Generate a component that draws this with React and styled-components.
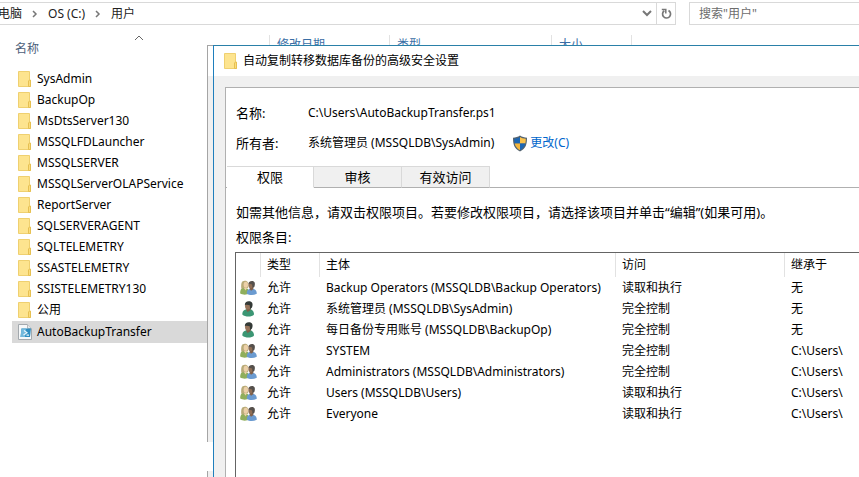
import React, { useState } from "react";
import styled, { createGlobalStyle } from "styled-components";

const folders = [
  "SysAdmin",
  "BackupOp",
  "MsDtsServer130",
  "MSSQLFDLauncher",
  "MSSQLSERVER",
  "MSSQLServerOLAPService",
  "ReportServer",
  "SQLSERVERAGENT",
  "SQLTELEMETRY",
  "SSASTELEMETRY",
  "SSISTELEMETRY130",
  "公用",
];

const entries = [
  { group: true, principal: "Backup Operators (MSSQLDB\\Backup Operators)", access: "读取和执行", from: "无" },
  { group: false, principal: "系统管理员 (MSSQLDB\\SysAdmin)", access: "完全控制", from: "无" },
  { group: false, principal: "每日备份专用账号 (MSSQLDB\\BackupOp)", access: "完全控制", from: "无" },
  { group: true, principal: "SYSTEM", access: "完全控制", from: "C:\\Users\\" },
  { group: true, principal: "Administrators (MSSQLDB\\Administrators)", access: "完全控制", from: "C:\\Users\\" },
  { group: true, principal: "Users (MSSQLDB\\Users)", access: "读取和执行", from: "C:\\Users\\" },
  { group: true, principal: "Everyone", access: "读取和执行", from: "C:\\Users\\" },
];

const tabs = ["权限", "审核", "有效访问"];

const FolderIcon = () => (
  <svg width="14" height="16" viewBox="0 0 14 16" aria-hidden="true">
    <path d="M.5.5h11v9h1v6H.5z" fill="#fde48f" stroke="#efd070" />
    <path d="M10.500 15.500V10l1-1h1v6.500z" fill="#fbdc7c" stroke="#e6c052" />
  </svg>
);

const ScriptIcon = () => (
  <svg width="14" height="16" viewBox="0 0 14 16" aria-hidden="true">
    <path d="M.5.5h9l4 4v11H.5z" fill="#f6f8f9" stroke="#a3a9ae" />
    <path d="M9.500.5v4h4" fill="#e6e9eb" stroke="#b4b9bd" />
    <path d="M3.500 4.500H13L12 13H2.500z" fill="#2f8dc0" />
    <path d="M3.500 4.500H8L7 13H2.500z" fill="#74b9dc" />
    <path d="M6 6.500 9 8.700l-3.500 2.300M8.500 11.200h2.500" fill="none" stroke="#e8f5fb" strokeWidth="1.200" />
  </svg>
);

const ShieldIcon = () => (
  <svg width="16" height="17" viewBox="0 0 16 17" aria-hidden="true">
    <path d="M8 .5C6 2 3.500 2.600 1 2.700 1 9 2 13.500 8 16.500 14 13.500 15 9 15 2.700 12.500 2.600 10 2 8 .5z" fill="#54636f" />
    <path d="M8 2C6.500 3 4.500 3.600 2.200 3.800c0 1.700.1 3.200.5 4.700H8z" fill="#1c66b4" />
    <path d="M8 2c1.500 1 3.500 1.600 5.800 1.800 0 1.700-.1 3.200-.5 4.700H8z" fill="#fbc24b" />
    <path d="M2.700 8.500H8v6.700C5 13.600 3.400 11.500 2.700 8.500z" fill="#f5b53a" />
    <path d="M13.300 8.500H8v6.700c3-1.600 4.600-3.700 5.300-6.700z" fill="#1c66b4" />
  </svg>
);

const GroupIcon = () => (
  <svg width="17" height="16" viewBox="0 0 17 16" aria-hidden="true">
    <path d="M.2 13.500C.2 9.500 1.500 7.500 4.500 7.500s4.500 2 4.500 6c-2 1.500-6.500 1.500-8.800 0z" fill="#8fae5c" />
    <path d="M1.300 8.500C.8 3.500 1.500.8 4.800.8S9 3.500 8 8z" fill="#b9ab78" />
    <ellipse cx="5.800" cy="4.800" rx="2.200" ry="3" fill="#ecd0a8" />
    <path d="M3.800 7.800 5.500 10.500l1.800-2.700z" fill="#ecd0a8" />
    <path d="M6.800 13.800c0-4 1.700-5.100 5-5.100s5 1.600 5 5.100c-2.300 1.600-7.700 1.600-10 0z" fill="#6b9bd0" />
    <path d="M10 7h3.300v2.200L11 10.800 9.500 9z" fill="#80604a" />
    <ellipse cx="10.800" cy="5" rx="2.400" ry="3.300" fill="#8f6e55" />
    <path d="M8.500 3.800C8.800 1.800 10 .9 12 .9c2.700 0 3.700 2.300 2.300 6l-1.800 1-.4-3.500C11 4 9.800 3.700 8.500 3.800z" fill="#55504c" />
  </svg>
);

const UserIcon = () => (
  <svg width="17" height="16" viewBox="0 0 17 16" aria-hidden="true">
    <path d="M2.300 13.500c0-4 2-5 5.700-5.500 4 0 6 2 6 5.500C12 16.200 5 16.200 2.300 13.500z" fill="#3b9674" />
    <path d="M6.500 7h4.300l-.3 2.200L7.500 11 6.300 9z" fill="#80604a" />
    <ellipse cx="7.800" cy="5" rx="2.800" ry="3.600" fill="#97745b" />
    <path d="M4.800 4.200C4.800 1.500 6.300.2 8.800.2c3.500 0 4.700 2.700 3.200 6.400l-1.800 1.700-.5-4C8 3.800 6.200 3.600 4.800 4.200z" fill="#343a37" />
  </svg>
);

const Chevron = () => (
  <svg width="6" height="8" viewBox="0 0 6 8" aria-hidden="true">
    <path d="m1 1 3 3-3 3" fill="none" stroke="#777" strokeWidth="1.500" />
  </svg>
);

const App = () => {
  const [activeTab, setActiveTab] = useState("权限");
  const [search, setSearch] = useState("");

  return (
    <Explorer>
      <GlobalStyle />
      <Toolbar>
        <AddressBar>
          <Crumbs>
            <a href="#pc">电脑</a>
            <Chevron />
            <a href="#c">OS (C:)</a>
            <Chevron />
            <a href="#users">用户</a>
          </Crumbs>
          <BarButton type="button" aria-label="历史记录">
            <svg width="10" height="7" viewBox="0 0 10 7">
              <path d="m1 1 4 4 4-4" fill="none" stroke="#777" strokeWidth="2" />
            </svg>
          </BarButton>
          <BarButton type="button" aria-label="刷新" $divided>
            <svg width="11" height="12" viewBox="0 0 11 12">
              <path d="M7.500 2.500a4 4 0 1 1-4.200.2" fill="none" stroke="#777" strokeWidth="1.700" />
              <path d="M.8 1.500h4v4" fill="none" stroke="#777" strokeWidth="1.500" />
            </svg>
          </BarButton>
        </AddressBar>
        <SearchBox
          type="text"
          aria-label="搜索"
          placeholder={'搜索"用户"'}
          value={search}
          onChange={(e) => setSearch(e.target.value)}
        />
      </Toolbar>

      <Columns>
        <NameColumn>
          名称
          <SortMark width="10" height="6" viewBox="0 0 10 6">
            <path d="m1 5 4-4 4 4" fill="none" stroke="#666" />
          </SortMark>
        </NameColumn>
        <Column $width={120}>修改日期</Column>
        <Column $width={162}>类型</Column>
        <Column $width={80}>大小</Column>
        <Column $width={1} />
      </Columns>

      <FileList>
        {folders.map((name) => (
          <FileRow key={name}>
            <FolderIcon />
            {name}
          </FileRow>
        ))}
        <FileRow $selected>
          <ScriptIcon />
          AutoBackupTransfer
        </FileRow>
      </FileList>

      <BackWindow>
        <BackEdge $grow />
        <BackEdge />
      </BackWindow>

      <Dialog role="dialog" aria-labelledby="dialog-title">
        <TitleBar>
          <FolderIcon />
          <h1 id="dialog-title">自动复制转移数据库备份的高级安全设置</h1>
        </TitleBar>
        <DialogBody>
          <Panel>
            <Details>
              <dt>名称:</dt>
              <dd>C:\Users\AutoBackupTransfer.ps1</dd>
              <dt>所有者:</dt>
              <dd>
                系统管理员 (MSSQLDB\SysAdmin)
                <ChangeLink href="#change">
                  <ShieldIcon />
                  更改(C)
                </ChangeLink>
              </dd>
            </Details>

            <TabList role="tablist">
              {tabs.map((tab) => (
                <Tab
                  key={tab}
                  type="button"
                  role="tab"
                  aria-selected={tab === activeTab}
                  $active={tab === activeTab}
                  onClick={() => setActiveTab(tab)}
                >
                  {tab}
                </Tab>
              ))}
            </TabList>

            <TabPage>
              <p>如需其他信息，请双击权限项目。若要修改权限项目，请选择该项目并单击“编辑”(如果可用)。</p>
              <p id="entries-label">权限条目:</p>
              <EntryBox>
                <EntryTable aria-labelledby="entries-label">
                  <colgroup>
                    <col width="25" />
                    <col width="59" />
                    <col width="296" />
                    <col width="169" />
                    <col />
                  </colgroup>
                  <thead>
                    <tr>
                      <th />
                      <th>类型</th>
                      <th>主体</th>
                      <th>访问</th>
                      <th>继承于</th>
                    </tr>
                  </thead>
                  <tbody>
                    {entries.map((entry) => (
                      <tr key={entry.principal}>
                        <IconCell>{entry.group ? <GroupIcon /> : <UserIcon />}</IconCell>
                        <td>允许</td>
                        <td>{entry.principal}</td>
                        <td>{entry.access}</td>
                        <td>{entry.from}</td>
                      </tr>
                    ))}
                  </tbody>
                </EntryTable>
              </EntryBox>
            </TabPage>
          </Panel>
        </DialogBody>
      </Dialog>
    </Explorer>
  );
};

const GlobalStyle = createGlobalStyle`
  * {
    box-sizing: border-box;
  }

  body {
    margin: 0;
    background: #fff;
  }

  body, button, input {
    font-family: "Noto Sans", "Noto Sans CJK SC", sans-serif;
    font-size: 12px;
    line-height: 20px;
    color: #000;
  }

  h1, p, dl, dd {
    margin: 0;
  }

  svg {
    display: block;
    flex: none;
  }
`;

const Explorer = styled.main`
  position: relative;
  display: flex;
  flex-direction: column;
  min-height: 100vh;
  overflow: hidden;
`;

const Toolbar = styled.div`
  display: flex;
  gap: 13px;
  padding-top: 2px;
`;

const AddressBar = styled.div`
  display: flex;
  flex: 1;
  height: 23px;
  border: 1px solid #d9d9d9;
  border-left: 0;
`;

const Crumbs = styled.nav`
  display: flex;
  flex: 1;
  align-items: center;
  gap: 10px;
  margin-left: -2px;

  a {
    color: #222;
    text-decoration: none;
  }
`;

const BarButton = styled.button`
  display: flex;
  align-items: center;
  justify-content: center;
  width: 19px;
  padding: 0;
  border: 0;
  border-left: ${({ $divided }) => ($divided ? "1px solid #d9d9d9" : "0")};
  background: none;
`;

const SearchBox = styled.input`
  width: 170px;
  height: 23px;
  padding: 0 9px;
  border: 1px solid #d9d9d9;
  border-right: 0;
  outline: none;

  &::placeholder {
    color: #6d6d6d;
    opacity: 1;
  }
`;

const Columns = styled.div`
  display: flex;
  height: 24px;
  margin-top: 10px;
  color: #3a6ea5;
`;

const NameColumn = styled.div`
  position: relative;
  width: 269px;
  padding: 4px 15px;
  color: #4c607a;
`;

const SortMark = styled.svg`
  position: absolute;
  top: 0;
  left: 134px;
`;

const Column = styled.div`
  width: ${({ $width }) => $width}px;
  padding-left: ${({ $width }) => ($width > 1 ? "7px" : "0")};
  border-left: 1px solid #e2e2e2;
`;

const FileList = styled.ul`
  width: 208px;
  margin: 9px 0 0;
  padding: 0 0 0 12px;
  list-style: none;
`;

const FileRow = styled.li`
  display: flex;
  align-items: center;
  gap: 5px;
  height: ${({ $selected }) => ($selected ? "22px" : "21px")};
  margin-top: ${({ $selected }) => ($selected ? "1px" : "0")};
  padding-left: 6px;
  background: ${({ $selected }) => ($selected ? "#d9d9d9" : "none")};
`;

/* sliver of the properties window that sits behind the dialog */
const BackWindow = styled.div`
  position: absolute;
  top: 45px;
  bottom: 0;
  left: 207px;
  display: flex;
  flex-direction: column;
  gap: 29px;
  width: 6px;
  background: #fff;
`;

const BackEdge = styled.div`
  flex: ${({ $grow }) => ($grow ? "1" : "0 0 6px")};
  border-left: 1px solid #a5a5a5;
  border-top: ${({ $grow }) => ($grow ? "1px solid #a5a5a5" : "0")};
  background: ${({ $grow }) =>
    $grow ? "linear-gradient(#fff 30px, #f0f0f0 30px)" : "#f0f0f0"};
`;

const Dialog = styled.section`
  position: absolute;
  top: 45px;
  right: 0;
  bottom: 0;
  left: 213px;
  display: flex;
  flex-direction: column;
  border-top: 1px solid #2a80a8;
  border-left: 1px solid #1f7fbd;
  background: #f0f0f0;
`;

const TitleBar = styled.header`
  display: flex;
  align-items: center;
  gap: 5px;
  height: 30px;
  padding-left: 10px;
  background: #fff;

  h1 {
    font-size: 12px;
    font-weight: 400;
  }
`;

const DialogBody = styled.div`
  display: flex;
  flex: 1;
  padding: 11px 0 0 11px;
`;

const Panel = styled.div`
  display: flex;
  flex: 1;
  flex-direction: column;
  min-width: 0;
  border-top: 1px solid #b0b0b0;
  border-left: 1px solid #b0b0b0;
  background: #fff;
`;

const Details = styled.dl`
  display: grid;
  grid-template-columns: 72px 1fr;
  row-gap: 10px;
  padding: 15px 0 13px 10px;

  dt {
    font-size: 13px;
  }

  dd {
    display: flex;
    align-items: center;
    gap: 18px;
  }
`;

const ChangeLink = styled.a`
  display: flex;
  align-items: center;
  gap: 2px;
  color: #0066cc;
  text-decoration: none;
`;

const TabList = styled.div`
  display: flex;
  height: 22px;
  padding-left: 1px;
  box-shadow: inset 0 -1px #b0b0b0;
`;

const Tab = styled.button`
  width: ${({ $active }) => ($active ? "87px" : "88px")};
  padding: 0;
  border: solid #d9d9d9;
  border-width: 1px 1px 0 0;
  border-bottom: 1px solid ${({ $active }) => ($active ? "#fff" : "#b0b0b0")};
  background: ${({ $active }) => ($active ? "#fff" : "#f0f0f0")};
  font-size: 13px;
  line-height: 18px;
`;

const TabPage = styled.div`
  display: flex;
  flex: 1;
  flex-direction: column;
  gap: 5px;
  padding: 14px 0 0 9px;

  p {
    padding-left: 1px;
    font-size: 13px;
    white-space: nowrap;
  }
`;

const EntryBox = styled.div`
  flex: 1;
  border-top: 1px solid #646464;
  border-left: 1px solid #646464;
`;

const EntryTable = styled.table`
  width: 100%;
  table-layout: fixed;
  border-collapse: separate;
  border-spacing: 0;

  th,
  td {
    height: 21px;
    padding: 0 0 0 6px;
    border-right: 1px solid transparent;
    font-weight: 400;
    text-align: left;
    white-space: nowrap;
  }

  th {
    height: 24px;
    border-right-color: #e2e2e2;
  }

  th:last-child {
    border-right: 0;
  }
`;

const IconCell = styled.td`
  && {
    padding-left: 4px;
  }
`;

export default App;
